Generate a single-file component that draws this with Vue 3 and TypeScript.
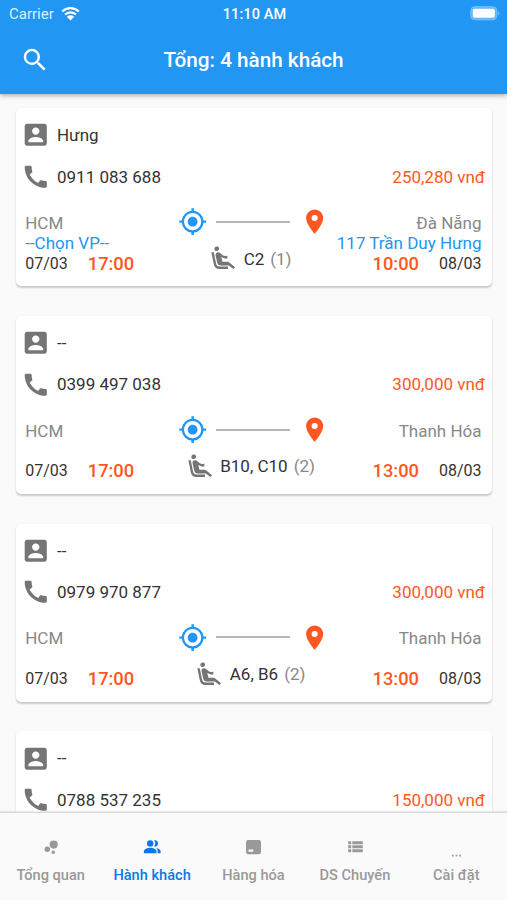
<script setup lang="ts">
interface Stop {
  city: string
  office: string
  date: string
  time: string
}

interface Trip {
  from: Stop
  to: Stop
  seats: string
  count: number
}

interface Passenger {
  name: string
  phone: string
  price: string
  trip?: Trip
}

interface Tab {
  icon: 'overview' | 'people' | 'goods' | 'list' | 'more'
  label: string
}

const departure = (office = ''): Stop => ({ city: 'HCM', office, date: '07/03', time: '17:00' })
const arrival = (city: string, time: string, office = ''): Stop => ({ city, office, date: '08/03', time })

const passengers: Passenger[] = [
  {
    name: 'Hưng', phone: '0911 083 688', price: '250,280 vnđ',
    trip: {
      from: departure('--Chọn VP--'), to: arrival('Đà Nẵng', '10:00', '117 Trần Duy Hưng'),
      seats: 'C2', count: 1,
    },
  },
  {
    name: '--', phone: '0399 497 038', price: '300,000 vnđ',
    trip: { from: departure(), to: arrival('Thanh Hóa', '13:00'), seats: 'B10, C10', count: 2 },
  },
  {
    name: '--', phone: '0979 970 877', price: '300,000 vnđ',
    trip: { from: departure(), to: arrival('Thanh Hóa', '13:00'), seats: 'A6, B6', count: 2 },
  },
  { name: '--', phone: '0788 537 235', price: '150,000 vnđ' },
]

const tabs: Tab[] = [
  { icon: 'overview', label: 'Tổng quan' },
  { icon: 'people', label: 'Hành khách' },
  { icon: 'goods', label: 'Hàng hóa' },
  { icon: 'list', label: 'DS Chuyến' },
  { icon: 'more', label: 'Cài đặt' },
]
const activeTab = 'people'
</script>

<template>
  <div class="screen">
    <header class="header">
      <div class="status">
        <div class="carrier">
          <span>Carrier</span>
          <svg class="wifi" viewBox="0 0 18 14">
            <path d="M1.2 5.1a11.2 11.2 0 0 1 15.6 0M3.9 8a7.3 7.3 0 0 1 10.2 0" fill="none" stroke="#fff" stroke-width="2.1" />
            <path d="M5.6 10a4.9 4.9 0 0 1 6.8 0L9 13.6z" fill="#fff" />
          </svg>
        </div>
        <div class="clock">11:10 AM</div>
        <div class="power">
          <svg class="battery" viewBox="0 0 31 15">
            <rect x=".8" y=".8" width="26" height="13" rx="4" fill="#64b5f8" stroke="#7ec2fa" />
            <rect x="2.8" y="2.8" width="22" height="9" rx="1.8" fill="#fff" />
            <path d="M28.2 5q2.5 2.3 0 4.6z" fill="#7ec2fa" />
          </svg>
        </div>
      </div>
      <div class="appbar">
        <svg class="search" viewBox="0 0 24 24">
          <path d="M15.5 14h-.79l-.28-.27A6.471 6.471 0 0 0 16 9.5 6.5 6.5 0 1 0 9.5 16c1.61 0 3.09-.59 4.23-1.57l.27.28v.79l5 4.99L20.49 19l-4.99-5zm-6 0C7.01 14 5 11.99 5 9.5S7.01 5 9.5 5 14 7.01 14 9.5 11.99 14 9.5 14z" />
        </svg>
        <h1 class="title">Tổng: 4 hành khách</h1>
      </div>
    </header>

    <main class="list">
      <article v-for="p in passengers" :key="p.phone" class="card">
        <div class="row">
          <svg class="icon" viewBox="0 0 24 24">
            <path d="M3 5v14c0 1.1.89 2 2 2h14c1.1 0 2-.9 2-2V5c0-1.1-.9-2-2-2H5c-1.11 0-2 .9-2 2zm12 4c0 1.66-1.34 3-3 3s-3-1.34-3-3 1.34-3 3-3 3 1.34 3 3zm-9 8c0-2 4-3.1 6-3.1s6 1.1 6 3.1v1H6v-1z" />
          </svg>
          <span class="name">{{ p.name }}</span>
        </div>
        <div class="row">
          <svg class="icon" viewBox="0 0 24 24">
            <path d="M20.01 15.38c-1.23 0-2.42-.2-3.53-.56a.977.977 0 0 0-1.01.24l-1.57 1.97c-2.83-1.35-5.48-3.9-6.89-6.83l1.95-1.66c.27-.28.35-.67.24-1.02-.37-1.11-.56-2.3-.56-3.53 0-.54-.45-.99-.99-.99H4.19C3.65 3 3 3.24 3 3.99 3 13.28 10.73 21 20.01 21c.71 0 .99-.63.99-1.18v-3.45c0-.54-.45-.99-.99-.99z" />
          </svg>
          <span class="phone">{{ p.phone }}</span>
          <span class="price">{{ p.price }}</span>
        </div>
        <div v-if="p.trip" class="trip">
          <div class="stop">
            <div class="city">{{ p.trip.from.city }}</div>
            <div class="office">{{ p.trip.from.office }}</div>
            <div class="when"><span class="date">{{ p.trip.from.date }}</span><span class="time">{{ p.trip.from.time }}</span></div>
          </div>
          <div class="middle">
            <div class="route">
              <svg class="gps" viewBox="0 0 24 24">
                <path d="M12 8c-2.21 0-4 1.79-4 4s1.79 4 4 4 4-1.79 4-4-1.79-4-4-4zm8.94 3A8.994 8.994 0 0 0 13 3.06V1h-2v2.06A8.994 8.994 0 0 0 3.06 11H1v2h2.06A8.994 8.994 0 0 0 11 20.94V23h2v-2.06A8.994 8.994 0 0 0 20.94 13H23v-2h-2.06zM12 19c-3.87 0-7-3.13-7-7s3.13-7 7-7 7 3.13 7 7-3.13 7-7 7z" />
              </svg>
              <svg class="line" viewBox="0 0 74 4">
                <path d="M0 1.2h74v1.6H0z" />
              </svg>
              <svg class="pin" viewBox="0 0 24 24">
                <path d="M12 2C8.13 2 5 5.13 5 9c0 5.25 7 13 7 13s7-7.75 7-13c0-3.87-3.13-7-7-7zm0 9.5a2.5 2.5 0 0 1 0-5 2.5 2.5 0 0 1 0 5z" />
              </svg>
            </div>
            <div class="seats">
              <svg class="seat" viewBox="0 0 24 24">
                <path d="M5.35 5.64c-.9-.64-1.12-1.88-.49-2.79.63-.9 1.88-1.12 2.79-.49.9.64 1.12 1.88.49 2.79-.64.9-1.88 1.12-2.79.49zM16 19H8.93c-1.48 0-2.74-1.08-2.96-2.54L4 7H2l1.99 9.76A5.01 5.01 0 0 0 8.94 21H16v-2zm.23-4h-4.88l-1.03-4.1c1.58.89 3.28 1.54 5.15 1.22V9.99c-1.63.31-3.44-.27-4.69-1.25L9.14 7.47c-.23-.18-.49-.3-.76-.38a2.21 2.21 0 0 0-.99-.06h-.02a2.268 2.268 0 0 0-1.84 2.61l1.35 5.92A3.008 3.008 0 0 0 9.83 18h6.85l3.82 3 1.5-1.5-5.77-4.5z" />
              </svg>
              <span>{{ p.trip.seats }}</span>
              <span class="count">({{ p.trip.count }})</span>
            </div>
          </div>
          <div class="stop end">
            <div class="city">{{ p.trip.to.city }}</div>
            <div class="office">{{ p.trip.to.office }}</div>
            <div class="when"><span class="time">{{ p.trip.to.time }}</span><span class="date">{{ p.trip.to.date }}</span></div>
          </div>
        </div>
      </article>
    </main>

    <nav class="tabs">
      <div v-for="t in tabs" :key="t.icon" class="tab" :class="{ active: t.icon === activeTab }">
        <svg class="tabicon" viewBox="0 0 20 20">
          <g v-if="t.icon === 'overview'">
            <circle cx="6.3" cy="12.2" r="2.7" />
            <circle cx="12.7" cy="7.6" r="4.1" />
            <circle cx="12.3" cy="15.3" r="1.7" />
          </g>
          <g v-else-if="t.icon === 'people'">
            <circle cx="8.2" cy="6.4" r="3.2" />
            <path d="M12 3.3a3.2 3.2 0 1 1 0 6.2 5 5 0 0 0 0-6.2zM1.9 16.2v-2.1c0-2.1 3.6-3.4 6.3-3.4s6.3 1.3 6.3 3.4v2.1zM14 11c2.3.4 4.6 1.5 4.6 3.2v2h-3v-2.1c0-1.3-.6-2.3-1.6-3.1z" />
          </g>
          <path v-else-if="t.icon === 'goods'" fill-rule="evenodd" d="M5.2 3h10.6a2.2 2.2 0 0 1 2.2 2.2V15a2.2 2.2 0 0 1-2.2 2.2H5.2A2.2 2.2 0 0 1 3 15V5.200A2.200 2.200 0 0 1 5.200 3zM5.500 12.600v2.200h4.800v-2.200z" />
          <path v-else-if="t.icon === 'list'" d="M3.2 4.2h3v3h-3zM7.300 4.200h10.500v3H7.300zM3.200 8.200h3v3h-3zM7.300 8.200h10.500v3H7.300zM3.200 12.200h3v3h-3zM7.300 12.200h10.500v3H7.300z" />
          <path v-else d="M6 17.8h1.7v1.7H6zM9.6 17.8h1.7v1.7H9.6zM13.2 17.8h1.7v1.7h-1.7z" />
        </svg>
        <span class="label">{{ t.label }}</span>
      </div>
    </nav>
  </div>
</template>

<style>
body {
  margin: 0;
  background: #fafafa;
}
</style>

<style scoped>
.screen {
  display: flex;
  flex-direction: column;
  width: 507px;
  height: 900px;
  overflow: hidden;
  background: #fafafa;
  color: #333;
  font-family: Roboto, "Liberation Sans", sans-serif;
  font-size: 17px;
}
svg {
  display: block;
  flex: none;
  fill: currentColor;
}
.header {
  z-index: 1;
  flex: none;
  height: 94px;
  background: #2196f3;
  color: #fff;
  box-shadow: 0 1px 5px rgba(0, 0, 0, 0.38);
}
.status {
  display: grid;
  grid-template-columns: 1fr auto 1fr;
  align-items: center;
  height: 28px;
  padding: 0 6px 0 9px;
  font-size: 15px;
}
.carrier {
  display: flex;
  align-items: center;
  gap: 7px;
  color: #d9f0ff;
}
.wifi {
  width: 19px;
  height: 15px;
  margin-top: -2px;
}
.clock {
  padding-right: 1px;
  font-size: 14.5px;
  font-weight: 500;
  letter-spacing: 0.1px;
}
.battery {
  width: 31px;
  height: 15px;
  margin: -1px 0 0 auto;
}
.appbar {
  display: grid;
  grid-template-columns: 70px 1fr 70px;
  align-items: center;
  height: 63px;
}
.search {
  width: 30px;
  height: 30px;
  margin: 1px 0 0 20px;
}
.title {
  margin: 0;
  text-align: center;
  font-size: 20.7px;
  font-weight: 500;
}
.list {
  display: flex;
  flex: 1;
  flex-direction: column;
  gap: 29.7px;
  min-height: 0;
  padding: 14.4px 15.5px 0;
  overflow: hidden;
}
.card {
  flex: none;
  box-sizing: border-box;
  height: 178px;
  padding: 6px 6.5px 0 5.7px;
  border-radius: 5px;
  background: #fff;
  box-shadow: 0 1.5px 2px rgba(0, 0, 0, 0.2);
}
.row {
  display: flex;
  align-items: center;
  height: 41.6px;
}
.icon {
  width: 29.5px;
  height: 29.5px;
  margin-right: 6.3px;
  color: #757575;
}
.price {
  margin-left: auto;
  color: #ff5722;
}
.trip {
  display: grid;
  grid-template-columns: 150px 1fr 150px;
  margin: 15.4px 3.5px 0 4px;
}
.stop {
  line-height: 20px;
}
.city {
  height: 20px;
  color: #888;
}
.office {
  height: 20px;
  color: #2196f3;
  white-space: nowrap;
}
.when {
  display: flex;
  gap: 20px;
  align-items: center;
  height: 20px;
  padding-top: 0.8px;
}
.date {
  font-size: 16px;
}
.time {
  color: #ff5722;
  font-size: 18.3px;
  font-weight: 500;
}
.end {
  text-align: right;
}
.end .when {
  justify-content: flex-end;
}
.route {
  display: flex;
  align-items: center;
  justify-content: center;
  gap: 9.5px;
  height: 18px;
}
.gps,
.pin {
  width: 29.3px;
  height: 29.3px;
}
.gps {
  color: #2196f3;
}
.pin {
  color: #ff5722;
}
.line {
  width: 74px;
  height: 4px;
  color: #9e9e9e;
}
.seats {
  display: flex;
  align-items: center;
  justify-content: center;
  height: 28px;
  margin-top: 13.6px;
  padding-right: 6px;
}
.seat {
  width: 28.5px;
  height: 28.5px;
  margin-right: 6px;
  color: #757575;
}
.count {
  margin-left: 6px;
  color: #888;
}
.tabs {
  z-index: 1;
  display: grid;
  flex: none;
  grid-template-columns: repeat(5, 1fr);
  box-sizing: border-box;
  height: 88px;
  border-top: 1px solid #d9d9d9;
  background: #fafafa;
  box-shadow: 0 -1px 1px rgba(0, 0, 0, 0.08);
}
.tab {
  display: flex;
  flex-direction: column;
  align-items: center;
  padding-top: 24px;
  color: #999;
}
.tab.active {
  color: #0b78e3;
}
.tabicon {
  width: 20px;
  height: 20px;
}
.label {
  margin-top: 8px;
  font-size: 14.6px;
  font-weight: 500;
  line-height: 20px;
}
</style>
